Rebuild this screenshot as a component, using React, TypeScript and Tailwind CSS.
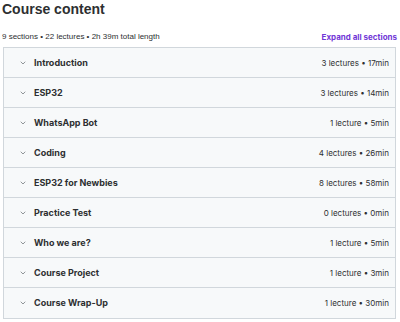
const sections = [
  { title: "Introduction", meta: "3 lectures • 17min" },
  { title: "ESP32", meta: "3 lectures • 14min" },
  { title: "WhatsApp Bot", meta: "1 lecture • 5min" },
  { title: "Coding", meta: "4 lectures • 26min" },
  { title: "ESP32 for Newbies", meta: "8 lectures • 58min" },
  { title: "Practice Test", meta: "0 lectures • 0min" },
  { title: "Who we are?", meta: "1 lecture • 5min" },
  { title: "Course Project", meta: "1 lecture • 3min" },
  { title: "Course Wrap-Up", meta: "1 lecture • 30min" },
];

function Chevron() {
  return (
    <svg className="h-[8px] w-[8px] shrink-0 text-[#6a6f73]" viewBox="0 0 24 24" fill="none">
      <path d="M6 9l6 6 6-6" stroke="currentColor" strokeWidth="2.2" strokeLinecap="round" strokeLinejoin="round" />
    </svg>
  );
}

export default function App() {
  return (
    <div className="h-[322px] w-[400px] bg-white text-[#2d2f31]" style={{ fontFamily: "Inter, 'Noto Sans', sans-serif" }}>
      <h2
        className="pl-[2px] text-[14px] font-bold leading-[18px]"
        style={{ fontFamily: "'Liberation Sans', Arial, sans-serif" }}
      >
        Course content
      </h2>
      <div className="mt-[13px] flex items-center justify-between pl-[2px] pr-[3px]">
        <span
          className="text-[8px] leading-[12px] text-[#2d2f31]"
          style={{ fontFamily: "'Liberation Sans', Arial, sans-serif" }}
        >
          9 sections • 22 lectures • 2h 39m total length
        </span>
        <button className="text-[8px] font-bold leading-[12px] text-[#7136d6]">Expand all sections</button>
      </div>
      <div className="mx-[3px] mt-[4px] w-[393px] border border-[#d1d7dc]">
        {sections.map((s, i) => (
          <div
            key={s.title}
            className={
              i < sections.length - 1
                ? "flex h-[30px] items-center border-b border-[#d1d7dc] bg-[#f7f9fa] pl-[15px] pr-[6px]"
                : "flex h-[30px] items-center bg-[#f7f9fa] pl-[15px] pr-[6px]"
            }
          >
            <Chevron />
            <span className="ml-[7px] flex-1 text-[9px] font-bold">{s.title}</span>
            <span className="text-[8px]">{s.meta}</span>
          </div>
        ))}
      </div>
    </div>
  );
}
